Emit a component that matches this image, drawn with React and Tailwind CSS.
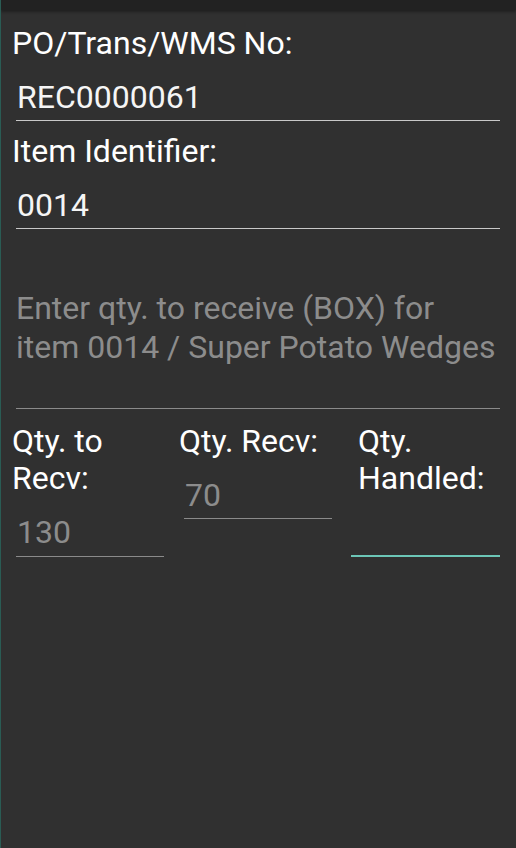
const FONT = { fontFamily: 'Roboto, "Noto Sans", sans-serif' }

function Field({ value, muted, line = 'light', className = '' }) {
  const lineCls =
    line === 'focus'
      ? 'border-b-2 border-[#6cc6b7]'
      : line === 'muted'
      ? 'border-b border-[#8a8a8a]'
      : 'border-b border-[#c8c8c8]'
  return (
    <div className={`mt-[16px] ${lineCls} ${className}`}>
      <div className={`h-[38px] text-[32px] leading-[38px] pl-[1px] ${muted ? 'text-[#8c8c8c]' : 'text-[#f5f5f5]'}`}>
        {value}
      </div>
    </div>
  )
}

export default function App() {
  return (
    <div className="w-[516px] h-[848px] bg-[#303030] border-l border-[#2a5c54] flex flex-col overflow-hidden" style={FONT}>
      {/* Status strip */}
      <div className="h-[10px] shrink-0 bg-[#222222] shadow-[0_2px_3px_rgba(0,0,0,0.35)]" />

      <div className="flex flex-col pl-[11px] pr-[16px]">
        <p className="mt-[14px] text-[32px] leading-[38px] text-white">PO/Trans/WMS No:</p>
        <Field value="REC0000061" className="ml-[4px] pb-[4px]" />

        <p className="mt-[11px] text-[32px] leading-[38px] text-white">Item Identifier:</p>
        <Field value="0014" className="ml-[4px] pb-[4px]" />

        {/* Multi-line hint field */}
        <div className="mt-[60px] ml-[4px] pb-[2px] border-b border-[#8a8a8a]">
          <div className="h-[117px] text-[32px] leading-[39px] text-[#8c8c8c]">
            Enter qty. to receive (BOX) for
            <br />
            item 0014 / Super Potato Wedges
          </div>
        </div>

        <div className="mt-[14px] flex items-start">
          <div className="w-[167px] flex flex-col">
            <p className="text-[32px] leading-[37px] text-white">Qty. to<br />Recv:</p>
            <Field value="130" muted line="muted" className="ml-[4px] w-[148px] pb-[5px]" />
          </div>
          <div className="w-[172px] flex flex-col">
            <p className="text-[32px] leading-[37px] text-white">Qty. Recv:</p>
            <Field value="70" muted line="muted" className="ml-[5px] w-[148px] pb-[4px]" />
          </div>
          <div className="flex-1 flex flex-col">
            <p className="ml-[7px] text-[32px] leading-[37px] text-white">Qty.<br />Handled:</p>
            <Field value="" line="focus" className="pb-[4px]" />
          </div>
        </div>
      </div>
    </div>
  )
}
